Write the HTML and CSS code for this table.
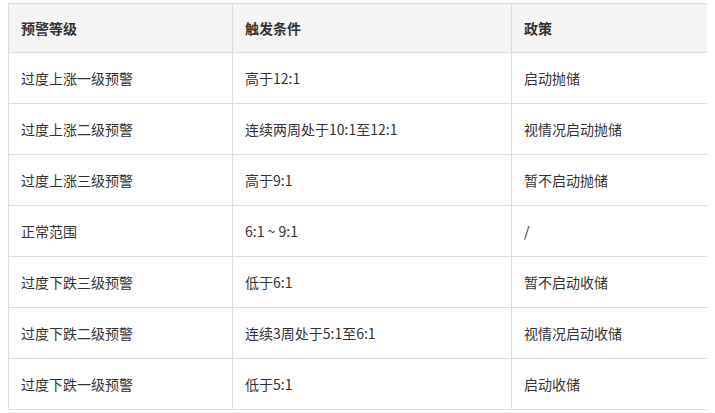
FILE: index.html
```html
<!DOCTYPE html>
<html lang="zh-CN">
<head>
<meta charset="utf-8">
<link rel="stylesheet" href="styles.css">
</head>
<body>
<table class="warn-table">
  <colgroup>
    <col class="c1"><col class="c2"><col class="c3">
  </colgroup>
  <thead>
    <tr><th>预警等级</th><th>触发条件</th><th>政策</th></tr>
  </thead>
  <tbody>
    <tr><td>过度上涨一级预警</td><td>高于12:1</td><td>启动抛储</td></tr>
    <tr><td>过度上涨二级预警</td><td>连续两周处于10:1至12:1</td><td>视情况启动抛储</td></tr>
    <tr><td>过度上涨三级预警</td><td>高于9:1</td><td>暂不启动抛储</td></tr>
    <tr><td>正常范围</td><td>6:1 ~ 9:1</td><td>/</td></tr>
    <tr><td>过度下跌三级预警</td><td>低于6:1</td><td>暂不启动收储</td></tr>
    <tr><td>过度下跌二级预警</td><td>连续3周处于5:1至6:1</td><td>视情况启动收储</td></tr>
    <tr><td>过度下跌一级预警</td><td>低于5:1</td><td>启动收储</td></tr>
  </tbody>
</table>
</body>
</html>
```
FILE: styles.css
```css
html, body {
  background: #fff;
}
body {
  margin: 3px 8px;
  font-family: "Noto Sans CJK SC", "Noto Sans", sans-serif;
  font-size: 14px;
  color: #333;
}
.warn-table {
  border-collapse: collapse;
  table-layout: fixed;
  width: 699px;
}
.c1 { width: 224px; }
.c2 { width: 279px; }
.c3 { width: 196px; }
.warn-table th,
.warn-table td {
  border: 1px solid #dcdcdc;
  height: 51px;
  padding: 0 12px;
  text-align: left;
  vertical-align: middle;
  box-sizing: border-box;
  line-height: 20px;
}
.warn-table th {
  height: 49px;
  background: #f4f4f4;
  font-weight: bold;
  color: #333;
}
.warn-table td {
  font-weight: normal;
}
```
